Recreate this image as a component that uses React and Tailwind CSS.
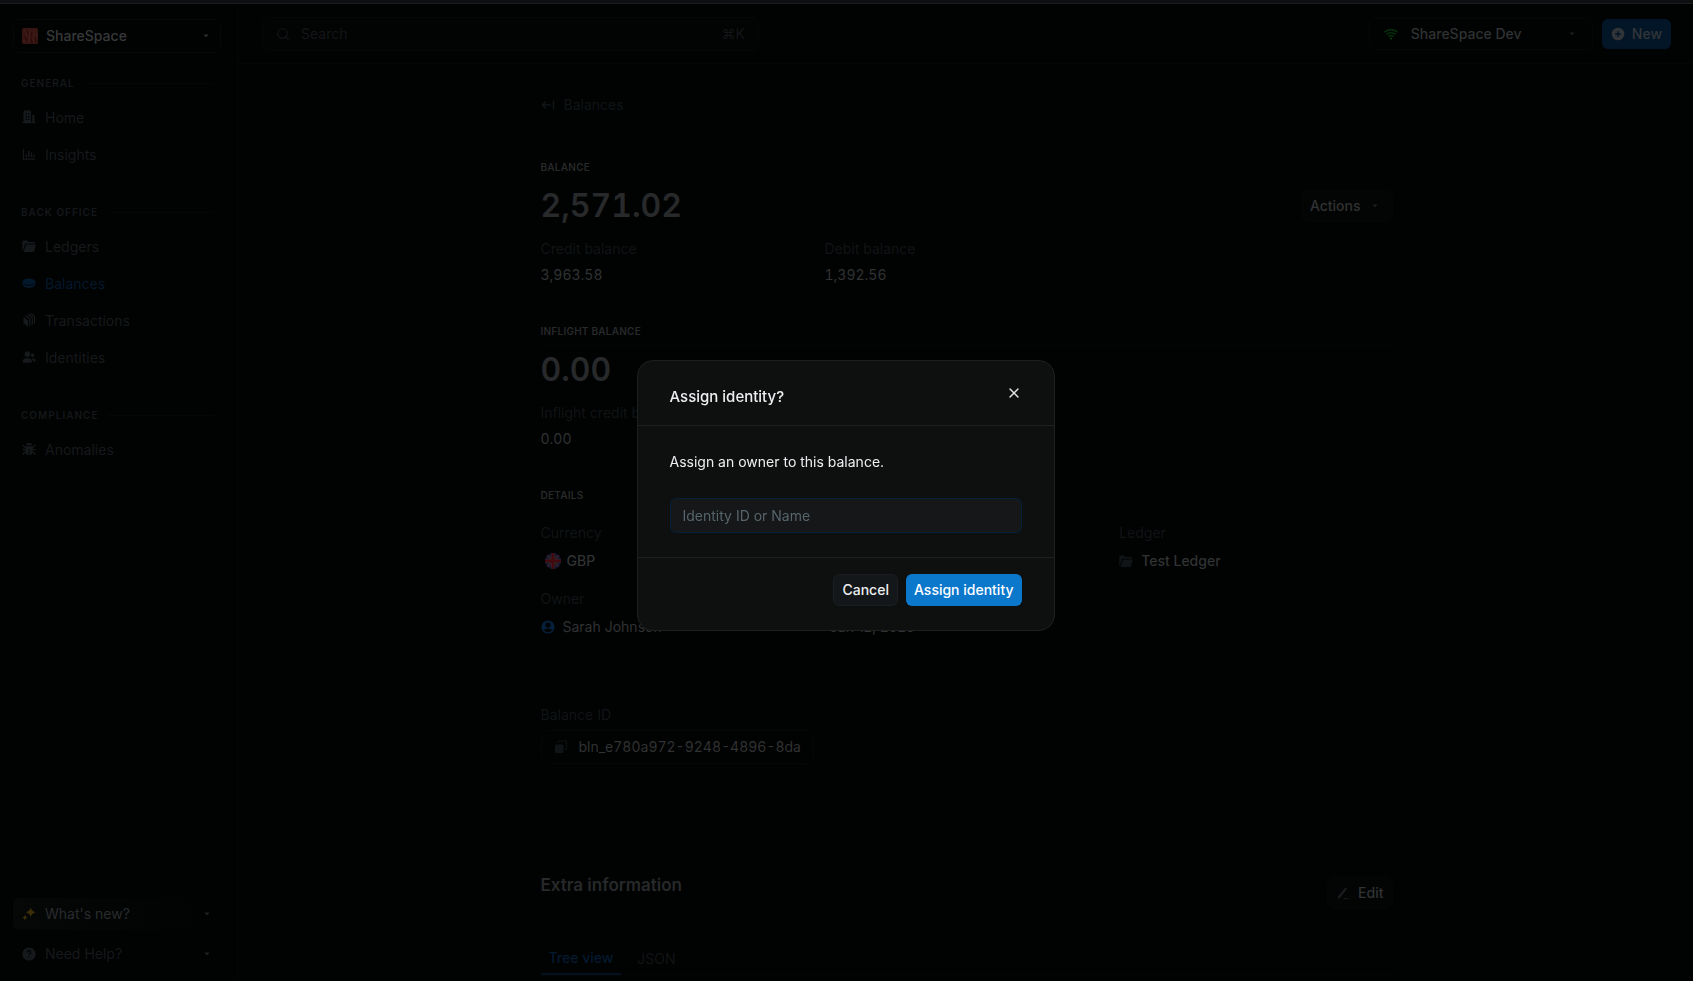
import { useState } from "react";
import { Search, X } from "lucide-react";

const icons = {
  building: (
    <path fillRule="evenodd" d="M3 .5h5a1 1 0 0 1 1 1V12h1.300V4.800h1.400a.8.8 0 0 1 .8.8V12h1.200v1.300H.3V12h1.200V1.500a1 1 0 0 1 1-1H3ZM3.600 3.200v1.300H5V3.200H3.600Zm2.400 0v1.300h1.300V3.200H6ZM3.600 5.900v1.300H5V5.900H3.600Zm2.400 0v1.300h1.300V5.900H6ZM3.600 8.600v1.300H5V8.600H3.600Zm2.400 0v1.300h1.300V8.600H6Z" />
  ),
  chart: (
    <path d="M.8 2h1.300v9.500H13v1.300H.8V2Zm2.700 5.500H5v2.800H3.500V7.500Zm2.600-3.500h1.500v6.300H6.100V4Zm2.600 1.500h1.500v4.800H8.700V5.500Zm2.500 2h1.400v2.800h-1.400V7.500Z" />
  ),
  folder: (
    <path d="M.3 12V2.200c0-.4.3-.7.700-.7h4.200L6.500 3h5.800c.4 0 .7.3.7.7v.8H3.300L.9 11.500.3 12Zm3.900-6.400h9.700L12 13H1.500l2.700-7.400Z" />
  ),
  coin: (
    <>
      <path d="M7 2.500c3.700 0 6.500 1.500 6.500 3.600v2c0 2.200-2.800 3.800-6.500 3.800S.5 10.300.5 8.100v-2C.5 4 3.300 2.500 7 2.500Z" />
      <path d="M1.600 7.300c.9 1.300 3 2 5.400 2s4.500-.7 5.400-2" fill="none" stroke="#010202" strokeWidth="0.9" />
    </>
  ),
  stack: (
    <path d="M1.500 4 6 7.200v6.600L1.500 10.600V4Zm2.400-2 4.500 3.200v7.600l-1.300.6V6.100L3 3.200 3.900 2Zm2.400-1.400 4.600 3.300v7.700l-1.300.3V4.700L5.500 1.700l.8-1.100ZM9 0l4 2.800v7.600l-1.200.3V3.500L8.200 1 9 0Z" />
  ),
  users: (
    <path d="M5.300 1.200a2.900 2.900 0 1 1 0 5.800 2.900 2.900 0 0 1 0-5.800Zm5.300 2a1.900 1.900 0 1 1 0 3.800 1.900 1.900 0 0 1 0-3.800ZM5.300 8c2.800 0 4.700 1.400 4.700 3.200 0 1-.8 1.600-1.800 1.600H2.400c-1 0-1.800-.6-1.800-1.600C.6 9.400 2.500 8 5.300 8Zm5.500.2c1.700 0 2.900.9 2.900 2.100 0 .8-.5 1.300-1.200 1.300h-1.400c0-1.500-.7-2.600-1.800-3.200.4-.1.900-.2 1.500-.2Z" />
  ),
  bug: (
    <>
      <path d="M7 .8c1.800 0 3 1 3.200 2.500H3.800C4 1.800 5.200.8 7 .8ZM3.300 4.300h7.400v4.900c0 2.200-1.300 3.900-3.200 4.200V7h-1v6.400c-1.900-.3-3.200-2-3.200-4.200V4.300Z" />
      <path d="M1.200 2.500v1.300l2.300 1.600M12.800 2.500v1.300l-2.300 1.600M.5 7.700h3M13.500 7.700h-3M1.400 13v-1.600l2.400-1.600M12.600 13v-1.600l-2.400-1.600" fill="none" stroke="currentColor" strokeWidth="1.200" />
    </>
  ),
  sparkles: (
    <path d="M8.700.3c.6 2.900 2.100 4.400 5 5-2.900.6-4.400 2.100-5 5-.6-2.900-2.100-4.400-5-5 2.900-.6 4.400-2.100 5-5ZM2.900 7.700c.4 1.700 1.200 2.500 2.800 2.800-1.600.4-2.400 1.200-2.800 2.900-.4-1.700-1.200-2.500-2.800-2.900 1.600-.3 2.400-1.100 2.800-2.800Z" />
  ),
  help: (
    <>
      <circle cx="7" cy="7" r="6.600" />
      <path d="M5.200 5.500C5.200 4.300 6 3.700 7 3.700s1.800.6 1.800 1.600c0 1.300-1.800 1.400-1.800 2.700M7 9.200v1.300" fill="none" stroke="#010202" strokeWidth="1.200" />
    </>
  ),
  back: (
    <path d="M5 3.500 1.500 7 5 10.500M1.700 7h7.800M12.500 2.500v9" fill="none" stroke="currentColor" strokeWidth="1.600" />
  ),
  wifi: (
    <>
      <path d="M.6 5.200c3.700-3.400 9.100-3.400 12.800 0M2.600 7.400c2.600-2.300 6.200-2.300 8.800 0M4.600 9.500c1.500-1.300 3.300-1.300 4.800 0" fill="none" stroke="currentColor" strokeWidth="1.600" />
      <circle cx="7" cy="11.500" r="1.200" />
    </>
  ),
  plus: (
    <path fillRule="evenodd" d="M7 .7a6.300 6.300 0 1 1 0 12.600A6.300 6.300 0 0 1 7 .7ZM6.300 4v2.300H4v1.400h2.300V10h1.400V7.700H10V6.300H7.700V4H6.300Z" />
  ),
  person: (
    <path fillRule="evenodd" d="M7 .4a6.600 6.600 0 1 1 0 13.200A6.600 6.600 0 0 1 7 .4Zm0 2.200a2.500 2.500 0 1 0 0 5 2.500 2.500 0 0 0 0-5Zm0 6c-1.700 0-3.200.7-4 1.700.9 1.200 2.300 2 4 2s3.100-.8 4-2c-.8-1-2.300-1.700-4-1.700Z" />
  ),
  copy: (
    <>
      <rect x="1" y="4.500" width="8.500" height="8.500" rx="1" />
      <path d="M4 3V1.800c0-.4.300-.8.800-.8h7c.5 0 .8.400.8.800v7c0 .5-.3.800-.8.800h-1" fill="none" stroke="currentColor" strokeWidth="1.100" />
    </>
  ),
  pencil: (
    <path d="M9.300 1.500 11 2.700 4.300 11.500 1.800 13l.5-3L9.300 1.500ZM7.500 12.200h5v1h-5v-1Z" />
  ),
};

const navSections = [
  {
    title: "General",
    items: [
      { label: "Home", icon: "building" },
      { label: "Insights", icon: "chart" },
    ],
  },
  {
    title: "Back office",
    items: [
      { label: "Ledgers", icon: "folder" },
      { label: "Balances", icon: "coin", active: true },
      { label: "Transactions", icon: "stack" },
      { label: "Identities", icon: "users" },
    ],
  },
  {
    title: "Compliance",
    items: [{ label: "Anomalies", icon: "bug" }],
  },
];

function Icon({ name, className = "" }) {
  return (
    <svg viewBox="0 0 14 14" fill="currentColor" aria-hidden="true" className={`size-3.5 shrink-0 ${className}`}>
      {icons[name]}
    </svg>
  );
}

function Caret({ className = "text-[#202326]" }) {
  return (
    <svg viewBox="0 0 8 5" fill="currentColor" aria-hidden="true" className={`h-1 w-1.5 shrink-0 ${className}`}>
      <path d="M.5.500h7L4 4.500.5.500Z" />
    </svg>
  );
}

function UkFlag() {
  return (
    <svg viewBox="0 0 16 16" aria-hidden="true" className="size-4 shrink-0">
      <clipPath id="flag-round">
        <circle cx="8" cy="8" r="8" />
      </clipPath>
      <g clipPath="url(#flag-round)">
        <rect width="16" height="16" fill="#0a1230" />
        <path d="M0 0l16 16M16 0L0 16" stroke="#2b2b2e" strokeWidth="2.400" />
        <path d="M0 0l16 16M16 0L0 16" stroke="#3a0c12" strokeWidth="1" />
        <path d="M8 0v16M0 8h16" stroke="#2b2b2e" strokeWidth="4.600" />
        <path d="M8 0v16M0 8h16" stroke="#42090f" strokeWidth="3" />
      </g>
    </svg>
  );
}

function WorkspaceLogo() {
  return (
    <svg viewBox="0 0 16 16" aria-hidden="true" className="size-4 shrink-0">
      <rect width="16" height="16" rx="1.500" fill="#351412" />
      <path d="M2 3c2-2 3 1 2 3s1 3 0 5M7 1c-1 3 2 3 1 6s-2 4 0 7M12 2c-2 2 1 4 0 6s-2 3 0 6M1 12l3 2M14 5l1 4" fill="none" stroke="#421d1a" strokeWidth="1.200" />
      <path d="M5 2l1 4M10 4l-1 5M3 8l2 5M13 9l1 5M9 11l1 4" fill="none" stroke="#240c0b" strokeWidth="1.200" />
    </svg>
  );
}

function Sidebar() {
  return (
    <aside className="flex w-[238px] shrink-0 flex-col border-r border-[#040505] px-[13px] pt-[15px] pb-[11px]">
      <button className="flex h-[34px] w-[208px] items-center rounded-md border border-[#060707] px-2 text-[#37393a]">
        <WorkspaceLogo />
        <span className="ml-2 flex-1 text-left font-medium">ShareSpace</span>
        <Caret className="mr-[3px] text-[#2a2c2e]" />
      </button>

      <nav className="mt-[22px] flex flex-col gap-[31px]">
        {navSections.map((section) => (
          <div key={section.title}>
            <div className="flex h-4 items-center gap-2.5 pr-[11px] pl-2 text-[10px] font-semibold tracking-widest text-[#14181a] uppercase">
              {section.title}
              <span className="h-px flex-1 bg-[#050606]" />
            </div>
            <ul className="mt-2">
              {section.items.map((item) => (
                <li key={item.label}>
                  <a
                    href="#"
                    className={`flex h-[37px] items-center gap-[9px] pl-[9px] ${item.active ? "text-[#04182c]" : "text-[#16191b]"}`}
                  >
                    <Icon name={item.icon} className="mb-0.5" />
                    {item.label}
                  </a>
                </li>
              ))}
            </ul>
          </div>
        ))}
      </nav>

      <div className="mt-auto flex flex-col gap-2">
        <button className="flex h-8 items-center gap-[9px] rounded-md bg-linear-to-r from-[#060808] to-[#010202] pr-3.5 pl-[9px] text-[#292b2d]">
          <Icon name="sparkles" className="text-[#3d2e08]" />
          <span className="flex-1 text-left">What's new?</span>
          <Caret />
        </button>
        <button className="flex h-8 items-center gap-[9px] pr-3.5 pl-[9px] text-[#16191b]">
          <Icon name="help" />
          <span className="flex-1 text-left">Need Help?</span>
          <Caret />
        </button>
      </div>
    </aside>
  );
}

function Header() {
  return (
    <header className="flex h-[60px] shrink-0 items-center border-b border-[#040505] pr-[22px] pl-6">
      <label className="flex h-[34px] w-[497px] items-center rounded-md border border-[#050606] bg-[#020303] px-[13px] text-[#131618]">
        <Search className="size-3.5" />
        <input
          type="search"
          aria-label="Search"
          placeholder="Search"
          className="ml-[11px] min-w-0 flex-1 bg-transparent outline-none placeholder:text-[#131618]"
        />
        <span>⌘K</span>
      </label>
      <button className="ml-auto flex h-8 w-56 items-center rounded-md border border-[#050606] px-3.5 text-[#303233]">
        <Icon name="wifi" className="text-[#06300c]" />
        <span className="ml-[13px] flex-1 text-left font-medium">ShareSpace Dev</span>
        <Caret className="mr-[3px] text-[#1a1d1f]" />
      </button>
      <button className="ml-[9px] flex h-[30px] items-center gap-[7px] rounded-md bg-[#031627] px-[9px] font-medium text-[#323538]">
        <Icon name="plus" />
        New
      </button>
    </header>
  );
}

function SectionTitle({ children }) {
  return (
    <h2 className="border-b border-[#040404] pb-[5px] text-[10px] leading-4 font-semibold tracking-wide text-[#27292a] uppercase">
      {children}
    </h2>
  );
}

function Stat({ label, value }) {
  return (
    <div>
      <dt className="text-[#101416]">{label}</dt>
      <dd className="mt-1.5 text-[#303233] tabular-nums">{value}</dd>
    </div>
  );
}

function Detail({ label, className = "", children }) {
  return (
    <div className={className}>
      <dt className="text-[#101416]">{label}</dt>
      <dd className="mt-2 flex items-center gap-2 text-[#303233]">{children}</dd>
    </div>
  );
}

function BalancePage() {
  return (
    <main className="mx-auto w-full max-w-[854px] pt-[31px] pl-0.5">
      <a href="#" className="flex items-center gap-[9px] text-[#101518]">
        <Icon name="back" />
        Balances
      </a>

      <section className="mt-11">
        <SectionTitle>Balance</SectionTitle>
        <div className="mt-[5px] flex h-10 items-center justify-between">
          <p className="text-[32px] font-semibold text-[#27292a] tabular-nums">2,571.02</p>
          <button className="flex h-8 items-center gap-[11px] rounded-md border border-[#040505] bg-[#030505] pr-3.5 pl-2 font-medium text-[#303233]">
            Actions
            <Caret className="text-[#1a1d1f]" />
          </button>
        </div>
        <dl className="mt-[13px] grid grid-cols-3">
          <Stat label="Credit balance" value="3,963.58" />
          <Stat label="Debit balance" value="1,392.56" />
        </dl>
      </section>

      <section className="mt-[38px]">
        <SectionTitle>Inflight balance</SectionTitle>
        <p className="mt-[5px] text-[32px] leading-10 font-semibold text-[#27292a] tabular-nums">0.00</p>
        <dl className="mt-[13px] grid grid-cols-3">
          <Stat label="Inflight credit balance" value="0.00" />
        </dl>
      </section>

      <section className="mt-[38px]">
        <SectionTitle>Details</SectionTitle>
        <dl className="mt-3.5 grid grid-cols-3 gap-x-4 gap-y-[18px] border-b border-[#040404] pb-[39px]">
          <Detail label="Currency">
            <span className="flex items-center gap-1.5 pl-1 font-medium">
              <UkFlag />
              GBP
            </span>
          </Detail>
          <Detail label="Ledger" className="col-start-3">
            <Icon name="folder" className="text-[#101416]" />
            <a href="#" className="font-medium">Test Ledger</a>
          </Detail>
          <Detail label="Owner">
            <Icon name="person" className="text-[#052038]" />
            <a href="#">Sarah Johnson</a>
          </Detail>
          <dd className="self-end text-[#303233]">Jan 12, 2025</dd>
        </dl>
      </section>

      <div className="mt-7">
        <p className="text-[#101416]">Balance ID</p>
        <button className="mt-[5px] flex h-[34px] items-center gap-[11px] rounded-lg border border-[#050606] px-3 text-[#303233] tabular-nums">
          <Icon name="copy" className="text-[#101416]" />
          bln_e780a972-9248-4896-8da
        </button>
      </div>

      <section className="mt-[109px]">
        <div className="flex items-start justify-between border-b border-[#040404] pb-4">
          <h2 className="text-[17px] leading-6 font-semibold text-[#27292a]">Extra information</h2>
          <button className="mt-1 flex h-8 items-center gap-2 rounded-md border border-[#040505] bg-[#030505] px-2 font-medium text-[#303233]">
            <Icon name="pencil" className="text-[#1a1d1f]" />
            Edit
          </button>
        </div>
        <div role="tablist" className="mt-[22px] flex border-b border-[#040404]">
          <button role="tab" aria-selected="true" className="border-b-2 border-[#031120] px-2 pb-[5px] font-medium text-[#041a30]">
            Tree view
          </button>
          <button role="tab" aria-selected="false" className="px-4 pb-[5px] text-[#101416]">
            JSON
          </button>
        </div>
      </section>
    </main>
  );
}

function AssignIdentityModal({ onClose }) {
  const [identity, setIdentity] = useState("");

  return (
    <div className="fixed inset-0 flex items-center justify-center pt-2.5 pr-0.5">
      <div
        role="dialog"
        aria-modal="true"
        aria-labelledby="assign-title"
        className="w-[418px] rounded-2xl border border-[#1d2021] bg-[#0e1010] text-[#edeef0]"
      >
        <div className="flex h-[65px] items-start justify-between border-b border-[#1d2021] px-8 pt-6">
          <h2 id="assign-title" className="text-[15px] leading-6 font-medium">Assign identity?</h2>
          <button aria-label="Close" onClick={onClose} className="text-[#e4e6e8]">
            <X className="size-4" strokeWidth={2} />
          </button>
        </div>
        <div className="px-8 pt-[26px] pb-6">
          <label htmlFor="identity" className="block">Assign an owner to this balance.</label>
          <input
            id="identity"
            type="text"
            value={identity}
            onChange={(e) => setIdentity(e.target.value)}
            placeholder="Identity ID or Name"
            className="mt-[26px] block h-[35px] w-full rounded-md border border-[#04203b] bg-[#151718] px-3 outline-none placeholder:text-[#56646c]"
          />
        </div>
        <div className="flex justify-end gap-2 border-t border-[#1d2021] px-8 pt-4 pb-6">
          <button onClick={onClose} className="h-8 rounded-md border border-[#1b1e20] bg-[#13171a] px-2 font-medium">
            Cancel
          </button>
          <button className="h-8 rounded-md bg-[#0b78cc] px-2 font-medium text-white">Assign identity</button>
        </div>
      </div>
    </div>
  );
}

function App() {
  const [showModal, setShowModal] = useState(true);

  return (
    <div className="flex h-screen flex-col overflow-hidden bg-[#010202] font-['Inter',sans-serif] text-sm">
      <div className="h-1 shrink-0 border-b border-[#1a1c1e] bg-[#0e0f11]" />
      <div className="flex min-h-0 flex-1">
        <Sidebar />
        <div className="flex min-w-0 flex-1 flex-col">
          <Header />
          <BalancePage />
        </div>
      </div>

      {showModal && <AssignIdentityModal onClose={() => setShowModal(false)} />}
    </div>
  );
}

export default App;
